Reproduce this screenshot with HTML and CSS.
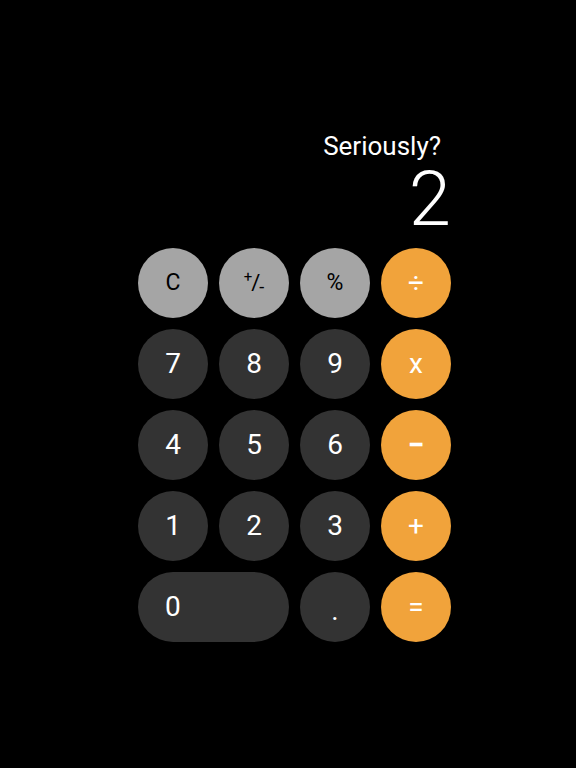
FILE: index.html
```html
<!DOCTYPE html>
<html>
<head>
<meta charset="utf-8">
<link rel="stylesheet" href="styles.css">
</head>
<body>
<div class="calc">
  <div class="display">
    <div class="caption">Seriously?</div>
    <div class="value">2</div>
  </div>
  <div class="keys">
    <div class="key fn">C</div>
    <div class="key fn pm"><span class="sup">+</span><span class="slash">/</span><span class="sub">-</span></div>
    <div class="key fn">%</div>
    <div class="key op">÷</div>
    <div class="key num">7</div>
    <div class="key num">8</div>
    <div class="key num">9</div>
    <div class="key op">x</div>
    <div class="key num">4</div>
    <div class="key num">5</div>
    <div class="key num">6</div>
    <div class="key op minus">−</div>
    <div class="key num">1</div>
    <div class="key num">2</div>
    <div class="key num">3</div>
    <div class="key op">+</div>
    <div class="key num zero">0</div>
    <div class="key num dot">.</div>
    <div class="key op">=</div>
  </div>
</div>
</body>
</html>
```
FILE: styles.css
```css
html, body {
  margin: 0;
  padding: 0;
  background: #000;
  height: 100%;
}
body {
  font-family: Roboto, "Liberation Sans", sans-serif;
}
.calc {
  padding-top: 131px;
  padding-left: 138px;
  width: 313px;
}
.display {
  text-align: right;
  color: #fff;
}
.caption {
  font-size: 26px;
  line-height: 30px;
  font-weight: 400;
  padding-right: 10px;
}
.value {
  font-size: 76px;
  line-height: 76px;
  font-weight: 300;
  margin-bottom: 11px;
  padding-right: 0;
}
.keys {
  display: grid;
  grid-template-columns: repeat(4, 70px);
  grid-auto-rows: 70px;
  gap: 11px;
}
.key {
  border-radius: 35px;
  display: flex;
  align-items: center;
  justify-content: center;
  font-size: 28px;
  color: #fff;
  padding-bottom: 2px;
  box-sizing: border-box;
}
.fn {
  background: #a5a5a5;
  color: #000;
  font-size: 23px;
}
.num {
  background: #333333;
}
.op {
  background: #f1a33b;
  font-size: 28px;
  font-weight: 400;
}
.minus {
  font-weight: 700;
  font-size: 30px;
}
.zero {
  grid-column: span 2;
  justify-content: flex-start;
  padding-left: 27px;
}
.dot {
  font-size: 28px;
  padding-top: 8px;
}
.pm {
  font-size: 15px;
  position: relative;
}
.pm .sup {
  position: relative;
  top: -5px;
}
.pm .slash {
  font-size: 22px;
  margin: 0 -1px;
}
.pm .sub {
  position: relative;
  top: 4px;
  font-size: 18px;
}
```
